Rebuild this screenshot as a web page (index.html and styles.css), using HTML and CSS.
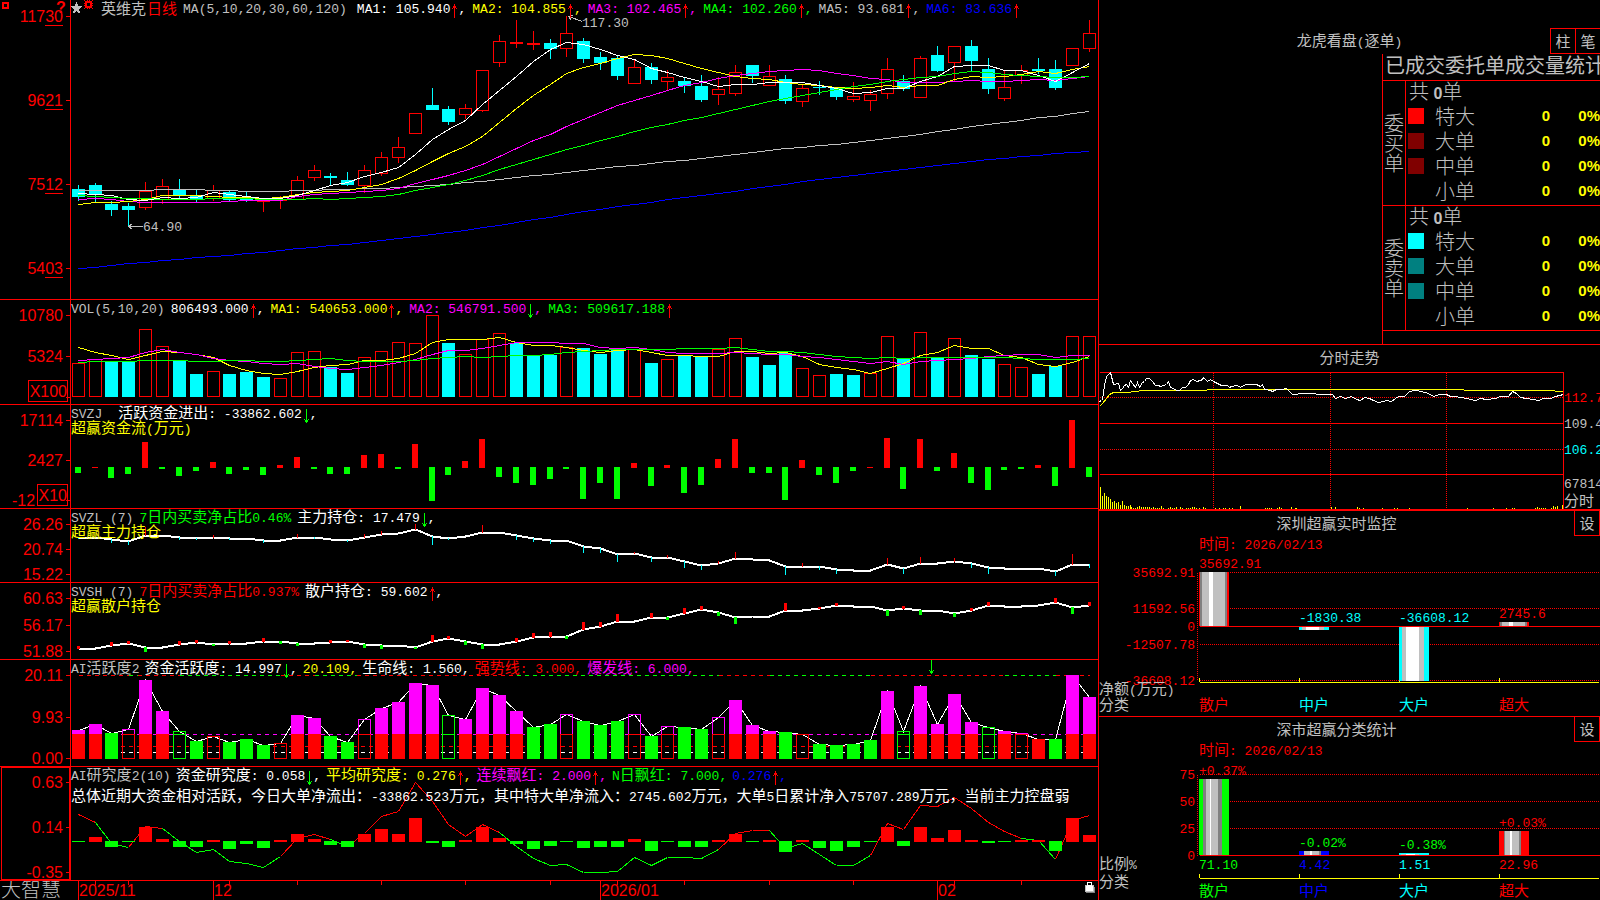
FILE: index.html
```html
<!DOCTYPE html>
<html lang="zh-CN">
<head>
<meta charset="utf-8">
<title>大智慧 - 英维克 日线</title>
<link rel="stylesheet" href="styles.css">
</head>
<body>
<svg class="defs" aria-hidden="true">
  <symbol id="up" viewBox="0 0 8 15"><path class="r f" d="M4 0h1v14h-1zM3 2h3v2h-3zM2 4h1v1h-1zM6 4h1v1h-1z"/></symbol>
  <symbol id="down" viewBox="0 0 8 15"><path class="g f" d="M4 0h1v14h-1zM3 11h3v2h-3zM2 10h1v1h-1zM6 10h1v1h-1z"/></symbol>
  <symbol id="star" viewBox="0 0 11 11"><path class="a f" d="M5 0h1v2h1v2h4v1h-1v1h-1v1h-1v2h1v2h-2v-1h-1v-1h-1v1h-1v1h-2v-2h1v-2h-1v-1h-1v-1h-1v-1h4v-2h1z"/></symbol>
  <symbol id="gear" viewBox="0 0 9 9"><path class="r f" fill-rule="evenodd" d="M0 0h1v1h2v-1h1v1h1v-1h1v1h2v-1h1v1h-1v2h1v1h-1v1h1v1h-1v2h1v1h-1v-1h-2v1h-1v-1h-1v1h-1v-1h-2v1h-1v-1h1v-2h-1v-1h1v-1h-1v-1h1v-2h-1zM3 3v3h3v-3z"/></symbol>
</svg>
<main class="desk">
  <div class="charts">
    <section class="panel">
      <svg id="price" class="plot"></svg>
      <div class="head">
        <div class="legend tight price-legend">
          <span class="tools"><svg class="star"><use href="#star"/></svg><svg class="gear"><use href="#gear"/></svg></span>
          <span class="stock"><span class="a cn">英维克</span><span class="r cn">日线</span></span>
          <span class="a">MA(5,10,20,30,60,120)</span>
          <span class="w first">MA1: 105.940<svg class="arrow"><use href="#up"/></svg>,</span>
          <span class="y">MA2: 104.855<svg class="arrow"><use href="#up"/></svg>,</span>
          <span class="m">MA3: 102.465<svg class="arrow"><use href="#up"/></svg>,</span>
          <span class="g">MA4: 102.260<svg class="arrow"><use href="#up"/></svg>,</span>
          <span class="a">MA5: 93.681<svg class="arrow"><use href="#up"/></svg>,</span>
          <span class="b">MA6: 83.636<svg class="arrow"><use href="#up"/></svg></span>
        </div>
      </div>
    </section>
    <section class="panel">
      <svg id="vol" class="plot"></svg>
      <div class="head">
        <div class="legend tight">
          <span class="a">VOL(5,10,20)</span>
          <span class="w">806493.000<svg class="arrow"><use href="#up"/></svg>,</span>
          <span class="y">MA1: 540653.000<svg class="arrow"><use href="#up"/></svg>,</span>
          <span class="m">MA2: 546791.500<svg class="arrow"><use href="#down"/></svg>,</span>
          <span class="g">MA3: 509617.188<svg class="arrow"><use href="#up"/></svg></span>
        </div>
      </div>
    </section>
    <section class="panel">
      <svg id="flow" class="plot"></svg>
      <div class="head">
        <div class="legend wide">
          <span class="a">SVZJ</span>
          <span class="w"><span class="cn">活跃资金进出</span>: -33862.602<svg class="arrow"><use href="#down"/></svg>,</span>
        </div>
        <div class="y"><span class="cn">超赢资金流</span>(<span class="cn">万元</span>)</div>
      </div>
    </section>
    <section class="panel">
      <svg id="major" class="plot"></svg>
      <div class="head">
        <div class="legend tight">
          <span class="a">SVZL (7)</span>
          <span class="g">7<span class="cn">日内买卖净占比</span>0.46%</span>
          <span class="w"><span class="cn">主力持仓</span>: 17.479<svg class="arrow"><use href="#down"/></svg>,</span>
        </div>
        <div class="y"><span class="cn">超赢主力持仓</span></div>
      </div>
    </section>
    <section class="panel">
      <svg id="retail" class="plot"></svg>
      <div class="head">
        <div class="legend tight">
          <span class="a">SVSH (7)</span>
          <span class="r">7<span class="cn">日内买卖净占比</span>0.937%</span>
          <span class="w"><span class="cn">散户持仓</span>: 59.602<svg class="arrow"><use href="#up"/></svg>,</span>
        </div>
        <div class="y"><span class="cn">超赢散户持仓</span></div>
      </div>
    </section>
    <section class="panel">
      <svg id="active" class="plot"></svg>
      <div class="head">
        <div class="legend">
          <span class="a">AI<span class="cn">活跃度</span>2</span>
          <span class="w"><span class="cn">资金活跃度</span>: 14.997<svg class="arrow"><use href="#down"/></svg>,</span>
          <span class="y">20.109,</span>
          <span class="w"><span class="cn">生命线</span>: 1.560,</span>
          <span class="r"><span class="cn">强势线</span>: 3.000,</span>
          <span class="m"><span class="cn">爆发线</span>: 6.000,</span>
        </div>
      </div>
    </section>
    <section class="panel">
      <svg id="study" class="plot"></svg>
      <div class="head">
        <div class="legend">
          <span class="a">AI<span class="cn">研究度</span>2(10)</span>
          <span class="w"><span class="cn">资金研究度</span>: 0.058<svg class="arrow"><use href="#down"/></svg>,</span>
          <span class="y"><span class="cn">平均研究度</span>: 0.276<svg class="arrow"><use href="#up"/></svg>,</span>
          <span class="m"><span class="cn">连续飘红</span>: 2.000<svg class="arrow"><use href="#up"/></svg>,</span>
          <span class="g">N<span class="cn">日飘红</span>: 7.000,</span>
          <span class="b">0.276<svg class="arrow"><use href="#up"/></svg>,</span>
        </div>
        <div class="w note"><span class="cn">总体近期大资金相对活跃，今日大单净流出：</span>-33862.523<span class="cn">万元，其中特大单净流入：</span>2745.602<span class="cn">万元，大单</span>5<span class="cn">日累计净入</span>75707.289<span class="cn">万元，当前主力控盘弱</span></div>
      </div>
    </section>
    <footer class="panel timeline">
      <svg id="dates" class="plot"></svg>
    </footer>
  </div>

  <aside class="side">
    <section class="orders">
      <header class="orders-top">
        <h2><span class="cn">龙虎看盘</span>(<span class="cn">逐单</span>)</h2>
        <div class="modes"><button type="button">柱</button><button type="button">笔</button></div>
      </header>
      <div class="orders-body">
        <div class="orders-list"></div>
        <div class="stats">
          <h3>已成交委托单成交量统计</h3>
          <table>
            <tbody>
              <tr><th class="sidehead" rowspan="5" scope="rowgroup"><span>委买单</span></th><td class="total" colspan="4">共 <b>0</b>单</td></tr>
              <tr><td class="key"><i class="swatch r"></i></td><td class="name">特大</td><td class="num">0</td><td class="num">0%</td></tr>
              <tr><td class="key"><i class="swatch dr"></i></td><td class="name">大单</td><td class="num">0</td><td class="num">0%</td></tr>
              <tr><td class="key"><i class="swatch dr"></i></td><td class="name">中单</td><td class="num">0</td><td class="num">0%</td></tr>
              <tr class="last"><td class="key"></td><td class="name">小单</td><td class="num">0</td><td class="num">0%</td></tr>
            </tbody>
            <tbody>
              <tr><th class="sidehead" rowspan="5" scope="rowgroup"><span>委卖单</span></th><td class="total" colspan="4">共 <b>0</b>单</td></tr>
              <tr><td class="key"><i class="swatch c"></i></td><td class="name">特大</td><td class="num">0</td><td class="num">0%</td></tr>
              <tr><td class="key"><i class="swatch t"></i></td><td class="name">大单</td><td class="num">0</td><td class="num">0%</td></tr>
              <tr><td class="key"><i class="swatch t"></i></td><td class="name">中单</td><td class="num">0</td><td class="num">0%</td></tr>
              <tr class="last"><td class="key"></td><td class="name">小单</td><td class="num">0</td><td class="num">0%</td></tr>
            </tbody>
          </table>
        </div>
      </div>
    </section>
    <section class="panel intraday">
      <svg id="intraday" class="plot"></svg>
      <h2 class="cn">分时走势</h2>
    </section>
    <section class="panel monitor">
      <svg id="net" class="plot"></svg>
      <div class="bar"><h2 class="cn">深圳超赢实时监控</h2><button type="button">设</button></div>
    </section>
    <section class="panel monitor">
      <svg id="ratio" class="plot"></svg>
      <div class="bar"><h2 class="cn">深市超赢分类统计</h2><button type="button">设</button></div>
    </section>
  </aside>
</main>
<script src="charts.js"></script>
</body>
</html>
```
FILE: styles.css
```css
* { box-sizing: border-box; }

body {
  margin: 0;
  background: #000;
  color: #c0c0c0;
  font-family: "Liberation Mono", "Noto Sans CJK SC", monospace;
  font-size: 13px;
  line-height: 15px;
  overflow: hidden;
}

h2, h3 { margin: 0; font-size: inherit; font-weight: normal; }

.defs { position: absolute; width: 0; height: 0; }
.cn { font-family: "Noto Sans CJK SC", sans-serif; font-size: 15px; }
.head .cn, .orders-top .cn { line-height: 0; }

/* palette */
.r { --c: #f00; color: #f00; }
.g { --c: #0f0; color: #0f0; }
.y { --c: #ff0; color: #ff0; }
.m { --c: #f0f; color: #f0f; }
.c { --c: #0ff; color: #0ff; }
.w { --c: #fff; color: #fff; }
.a { --c: #c0c0c0; color: #c0c0c0; }
.b { --c: #00f; color: #00f; }
.d { --c: #808080; }
.dr { --c: #800000; }
.t { --c: #008080; }
.f { fill: var(--c); }
.s { fill: none; stroke: var(--c); }
.thick { stroke-width: 2; }
.dash { stroke-dasharray: 4 4; }
.dots { stroke-dasharray: 1 1; }

.desk {
  display: grid;
  grid-template-columns: minmax(0, 1099fr) minmax(0, 501fr);
  grid-template-rows: minmax(0, 1fr);
  height: 100vh;
}

.charts {
  display: grid;
  grid-template-columns: minmax(0, 1fr);
  grid-template-rows:
    minmax(0, 300fr) minmax(0, 105fr) minmax(0, 104fr) minmax(0, 74fr)
    minmax(0, 77fr) minmax(0, 107fr) minmax(0, 114fr) minmax(0, 19fr);
  border-right: 1px solid #f00;
  min-width: 0;
}

.panel {
  display: grid;
  grid-template: minmax(0, 1fr) / minmax(0, 1fr);
  border-bottom: 1px solid #f00;
  min-width: 0;
  min-height: 0;
  overflow: hidden;
}
.panel > * { grid-area: 1 / 1; }
.timeline { border-bottom: 0; }

.plot {
  display: block;
  width: 100%;
  height: 100%;
  min-height: 0;
  overflow: hidden;
  shape-rendering: crispEdges;
}
.plot text { fill: var(--c); white-space: pre; }
.plot .scale { font-family: "Liberation Sans", sans-serif; font-size: 16px; }
.plot .brand { font-family: "Noto Sans CJK SC", sans-serif; font-size: 20px; font-weight: 300; }
.plot .help { font-family: "Liberation Sans", sans-serif; font-size: 16px; font-weight: bold; }

.head { padding: 2px 0 0 71px; white-space: nowrap; height: 0; }
.head > div { height: 15px; }
.legend { display: flex; gap: 5px; }
.legend > span { height: 15px; white-space: pre; }
.tight { gap: 6px; }
.wide { gap: 16px; }
.price-legend .first { margin-left: 4px; }
.tools { display: flex; gap: 2px; width: 22px; margin: -2px 2px 0 0; }
.stock { display: flex; gap: 1px; line-height: 15px; }
.legend .stock .cn { line-height: 12px; }
.head .note { margin-top: 6px; }
.arrow { width: 8px; height: 15px; margin: -4px 0; vertical-align: -2px; shape-rendering: crispEdges; }
.star { width: 11px; height: 11px; margin-top: 2px; shape-rendering: crispEdges; }
.gear { width: 9px; height: 9px; shape-rendering: crispEdges; }

.side {
  display: grid;
  grid-template-columns: minmax(0, 1fr);
  grid-template-rows: minmax(0, 345fr) minmax(0, 166fr) minmax(0, 206fr) minmax(0, 183fr);
  min-width: 0;
}

button {
  width: 25px;
  height: 26px;
  padding: 0;
  border: 0 solid #f00;
  border-width: 1px 0 1px 1px;
  background: #000;
  color: #c0c0c0;
  font: 15px/20px "Noto Sans CJK SC", sans-serif;
}

.orders {
  display: flex;
  flex-direction: column;
  padding-top: 28px;
  border-bottom: 1px solid #f00;
  min-width: 0;
  overflow: hidden;
}
.orders-top { display: grid; grid-template-columns: 1fr auto 1fr; align-items: center; }
.orders-top h2 { grid-column: 2; padding-top: 3px; }
.modes { display: flex; justify-content: flex-end; }
.orders-body { display: flex; flex: 1; min-height: 0; }
.orders-list { flex: 1; }
.stats {
  width: 218px;
  border-left: 1px solid #f00;
  overflow: hidden;
  font-family: "Noto Sans CJK SC", sans-serif;
  font-size: 20px;
  font-weight: 300;
}
.stats h3 {
  padding-left: 2px;
  height: 27px;
  line-height: 22px;
  border-bottom: 1px solid #f00;
  white-space: nowrap;
}
table { width: 100%; border-spacing: 0; }
tr { height: 25px; }
td, th { padding: 0; height: 25px; line-height: 20px; font-weight: 300; }
td { vertical-align: top; }
.last td, .sidehead { border-bottom: 1px solid #f00; }
.sidehead { width: 23px; border-right: 1px solid #f00; }
.sidehead span { display: block; width: 20px; margin: 0 auto; line-height: 20px; }
.total { padding-left: 3px; }
.total b { font: bold 16px/16px "Liberation Sans", sans-serif; }
.key { width: 29px; padding: 2px 0 0 2px; }
.swatch { display: block; width: 16px; height: 16px; background: var(--c); }
.num { color: #ff0; font: bold 15px/20px "Liberation Sans", sans-serif; text-align: right; width: 50px; }

.intraday { border-bottom-width: 2px; }
.intraday h2 { justify-self: center; margin-top: 4px; height: 15px; }
.monitor:last-child { border-bottom: 0; }
.bar { display: flex; height: 25px; align-items: center; }
.bar h2 { flex: 1; text-align: center; padding-bottom: 3px; }
.bar button { width: 26px; height: 25px; border-width: 0 1px 1px 1px; }
```
FILE: charts.js
```js
const NS = 'http://www.w3.org/2000/svg';
const FIRST = 78;
const STEP = 16.85;
const pos = i => FIRST + i * STEP;

class Chart {
  constructor(id, x0, x1, y0, y1) {
    this.svg = document.getElementById(id);
    this.svg.replaceChildren();
    this.w = this.svg.clientWidth;
    this.h = this.svg.clientHeight;
    Object.assign(this, { x0, x1, y0, y1 });
  }
  X(v) { return Math.floor((v - this.x0) / (this.x1 - this.x0) * this.w + 0.2); }
  Y(v) { return Math.floor((v - this.y0) / (this.y1 - this.y0) * this.h + 0.2); }
  add(tag, cls, attrs) {
    const e = document.createElementNS(NS, tag);
    e.setAttribute('class', cls);
    for (const k in attrs) e.setAttribute(k, attrs[k]);
    this.svg.append(e);
    return e;
  }
  line(cls, pts) {
    const points = pts.map(p => (this.X(p[0]) + 0.5) + ',' + (this.Y(p[1]) + 0.5)).join(' ');
    this.add('polyline', cls + ' s', { points });
  }
  series(cls, ys) { this.line(cls, ys.map((y, i) => [pos(i), y])); }
  fill(cls, x, y, width, height) { this.add('rect', cls + ' f', { x, y, width, height: Math.max(1, height) }); }
  frame(cls, x, y, width, height) {
    this.add('rect', cls + ' s', { x: x + 0.5, y: y + 0.5, width: width - 1, height: Math.max(1, height - 1) });
  }
  column(i, half) { return this.X(pos(i)) - half; }
  text(cls, x, y, str, anchor = 'start', dy = 5) {
    const t = this.add('text', cls, { x: this.X(x), y: this.Y(y) + dy, 'text-anchor': anchor });
    for (const run of str.match(/[\u2e80-\uffff]+|[^\u2e80-\uffff]+/g)) {
      const s = document.createElementNS(NS, 'tspan');
      if (run.charCodeAt(0) > 0x2e80 && !/brand/.test(cls)) s.setAttribute('class', 'cn');
      s.textContent = run;
      t.append(s);
    }
  }
  axis(labels) {
    this.fill('r', this.X(70), 0, 1, this.h);
    for (const [y, str] of labels) {
      this.fill('r', this.X(66), this.Y(y), 4, 1);
      if (str) this.text('r scale', 63, y, str, 'end', 6);
    }
  }
}

const candles = `c555,567,591,603 c549,555,583,606 c603,612,630,648 c609,618,630,678 r546,573,623,627 r537,559,598,610
c537,570,588,594 c570,588,597,606 r557,571,596,600 c572,577,600,608 c576,592,600,608 r600,600,604,633 r588,597,601,624
r528,541,598,598 r495,511,533,540 c519,528,534,555 c516,540,555,558 r495,511,557,578 r456,472,521,525 r411,442,473,486
r340,340,401,401 c264,315,330,330 c318,327,366,375 r312,325,344,354 r211,211,332,335 r105,124,188,198 r60,126,131,141
r93,129,134,147 c117,129,147,177 r50,100,146,168 c114,123,177,189 c156,171,189,210 c165,174,228,240 r180,202,250,250
c189,201,240,252 r210,232,244,270 c232,243,258,279 c225,258,300,306 r231,268,284,312 r195,217,281,285 c195,195,228,249
r195,229,257,257 c225,237,303,312 r253,265,305,318 c243,261,264,285 c264,264,291,300 r246,289,299,303 r270,283,302,330
r174,208,281,294 c225,243,267,273 r168,175,293,293 c138,165,213,216 r139,139,188,240 c120,138,183,214 c174,207,267,282
r212,262,296,300 r195,210,226,249 c174,207,213,222 c180,207,264,270 r145,145,197,197 r60,100,146,153`
  .split(/\s+/).map(s => [s[0], ...s.slice(1).split(',').map(Number)]);

const averages = {
  b: [805,801,795,791,787,782,777,773,769,765,760,756,751,746,741,737,732,726,721,715,709,702,696,690,682,675,667,658,651,642,634,628,618,613,606,598,592,586,579,573,565,560,553,543,538,531,525,520,513,507,502,496,490,484,478,474,469,465,460,457,454],
  a: [571,571,571,571,570,568,568,568,570,571,574,574,573,571,570,569,568,566,564,562,558,555,552,548,544,538,532,526,523,517,510,505,499,496,490,485,481,476,470,463,457,451,446,441,436,433,428,422,415,409,403,394,388,379,373,368,361,353,349,341,334],
  m: [598,595,598,603,607,607,607,607,607,604,602,600,600,590,582,580,578,574,570,565,550,538,526,512,492,468,446,422,402,379,358,337,316,301,287,271,256,246,235,226,220,214,211,208,211,220,226,234,239,246,248,247,244,241,243,244,242,238,240,235,230],
  y: [613,607,607,603,599,587,587,586,588,592,593,594,592,583,577,574,571,563,553,535,510,484,460,438,408,366,325,286,252,220,202,189,174,163,167,175,191,205,217,228,235,238,247,253,256,262,265,262,257,261,257,256,238,229,232,228,223,214,220,209,199],
  w: [579,584,587,598,601,592,595,592,577,583,589,594,596,587,570,556,547,528,517,502,463,417,388,362,312,270,228,184,148,127,133,148,165,179,204,217,232,244,259,254,254,247,247,247,257,264,280,277,265,264,244,228,199,196,196,211,212,226,244,218,190],
  g: [587,590,593,596,596,597,598,598,595,595,596,597,598,597,595,598,595,592,589,583,570,562,553,542,526,508,492,477,463,448,435,420,408,394,382,373,361,352,340,328,316,304,295,286,277,267,259,252,243,238,233,228,219,214,216,223,226,228,231,233,229]
};

const parse = s => s.trim().split(/\s+/).map(t => [t[0], Number(t.slice(1))]);

const volume = parse(`r220 r208 c215 c213 r118 r169 c212 c252 r244 c252 c246 c262 r265 r187 r184 c232 c249 r202 r184 r157
r160 r76 c159 r193 r149 r130 c159 c197 c195 r172 c174 c192 c178 r178 c219 r208 c197 c199 r178 r145 c201 c225 c190 r235 r256
c252 c255 r250 r139 c206 r127 c202 r145 c195 c207 r223 r232 c252 c229 r139 r139`);
const volumeAverages = {
  y: [172,187,196,208,196,184,187,193,202,226,240,250,253,244,231,226,223,212,211,205,190,157,148,149,149,143,157,166,167,172,181,187,182,178,187,196,197,200,199,184,184,189,187,199,222,232,239,250,234,221,196,187,166,175,176,196,203,222,230,217,199],
  m: [211,208,206,202,187,179,187,193,205,211,215,219,223,220,230,234,238,232,226,218,208,192,182,181,176,167,157,158,158,160,160,172,175,172,179,187,190,190,190,186,190,192,193,199,203,209,214,220,214,222,214,211,208,205,199,197,193,193,202,197,197],
  g: [217,214,213,214,211,211,212,214,213,211,212,213,214,211,208,206,211,213,214,214,210,206,202,199,202,199,196,196,193,187,184,182,177,177,178,178,175,175,175,172,177,184,184,187,192,199,202,205,203,206,202,202,202,202,202,202,205,208,209,208,205]
};

const flow = parse(`g549 r532 g564 g552 r456 g537 g558 g543 r516 g552 g540 g555 r525 r501 g537 g552 g552 r495 r492 g537 r462
g633 g555 r513 r447 g561 g579 g585 g567 g537 g627 g579 g627 r519 g588 r525 g609 g585 r507 r447 g549 g549 g630 r510 g555 g579
g543 r531 r444 g597 r447 g543 r489 g579 g600 g540 g537 r525 g588 r390 g561`);

const major = [741,741,748,753,736,736,741,744,741,744,745,750,750,741,742,748,750,743,733,731,719,739,745,740,726,727,737,745,750,750,769,774,792,791,801,802,813,826,821,806,808,810,828,828,829,838,840,840,824,834,820,819,815,820,832,834,834,834,844,822,822];
const majorSpikes = { 0:746,2:758,3:762,6:748,7:748,9:749,11:758,14:745,16:755,21:762,22:749,26:747,27:755,28:759,30:786,31:786,32:813,34:813,36:831,37:837,42:852,44:837,45:849,49:849,53:831,54:849,58:855,60:831,4:713,8:735,13:732,17:732,18:723,20:702,24:705,33:786,35:797,38:813,39:786,43:819,48:804,50:801,52:804,59:792 };
const retail = [234,234,227,220,231,232,223,218,222,219,219,213,214,219,219,217,213,223,225,226,232,213,205,213,222,222,213,203,198,198,178,170,153,153,141,142,129,118,127,141,138,138,120,120,116,107,108,108,121,116,120,121,130,121,107,108,108,107,98,112,107];
const retailSpikes = { 0:228,2:216,3:213,6:213,7:210,9:213,11:204,15:210,16:210,21:195,22:198,26:204,27:189,28:186,30:156,31:156,32:132,34:129,36:114,37:108,42:99,44:111,45:99,49:108,53:114,54:96,58:84,60:96,4:245,8:227,12:219,13:227,17:231,18:234,20:236,23:224,24:236,29:204,35:147,38:137,39:159,48:135,50:132,52:138,59:129 };

/* f: filled red/magenta, o: hollow red/magenta, g: filled green, h: hollow green */
const active = parse(`f480 f462 g489 o478 f330 f423 h484 g513 o499 g516 g507 g525 o520 f435 f444 g498 g516 o448 f414 f396 f339
f345 h436 f447 f354 f375 f423 g471 g462 o433 g453 g465 g453 o433 g498 o469 g471 g477 o442 f390 f465 f483 g486 o493 g522 g525
g522 g510 f363 h484 f348 f462 f372 f456 h472 f483 o490 f507 g507 f315 f381`);

const study = parse(`g814 r801 g831 g814 r771 r807 g831 g831 r810 g837 g822 g834 r810 r792 r807 g825 g831 r792 r777 r792 r744
g819 g831 r810 r771 r804 g822 g837 g828 g816 g834 g831 g831 r807 g843 g816 g831 g831 r810 r792 g816 r810 g846 r810 g834 g843
g831 g816 r771 g828 r771 r804 r780 r810 g819 g816 r810 r810 g843 r744 r795`);
const studyLine = [733,757,820,832,770,776,815,846,839,873,880,892,860,806,794,807,828,790,739,723,636,695,763,799,763,788,830,866,886,883,907,907,903,862,886,862,862,865,839,790,781,781,835,820,852,886,886,856,760,778,706,709,682,716,757,784,805,812,868,750,736];
const studyGreen = i => (i >= 1 && i <= 2) || (i >= 5 && i <= 11) || i === 15 || (i >= 25 && i <= 37) || (i >= 41 && i <= 46) || i === 56 || i === 57;

const minuteLine = [28,184,33,180,37,178,43,135,50,110,56,102,61,97,66,122,71,134,76,134,80,129,85,131,91,151,98,146,103,137,109,134,114,141,121,122,128,130,136,141,142,128,148,142,158,126,164,124,169,116,179,116,188,124,196,135,205,136,211,140,219,135,229,134,235,125,241,141,250,146,258,150,268,150,277,141,287,142,294,134,302,122,309,118,318,125,330,121,336,119,341,112,347,118,353,125,361,117,370,124,382,130,394,135,412,136,418,141,424,138,442,136,451,142,460,136,470,133,500,134,510,140,517,133,524,148,540,152,548,153,560,148,575,147,590,145,600,157,607,163,640,160,665,160,690,164,727,163,737,175,752,170,767,175,785,170,800,178,812,181,822,173,838,174,850,182,865,187,880,184,890,180,903,184,915,176,925,168,942,168,957,153,975,151,995,154,1015,159,1030,170,1048,163,1070,163,1080,170,1095,168,1110,172,1130,176,1155,181,1170,176,1190,178,1215,176,1230,170,1255,168,1268,154,1280,160,1290,172,1310,175,1330,178,1345,181,1360,174,1380,175,1395,168,1419,163];
const minuteMean = [28,199,38,190,48,175,58,163,70,158,110,156,160,152,300,150,400,148,870,149,1370,152,1419,155];
const minuteVolume = [31,441,37,470,43,459,49,468,55,471,61,477,67,486,73,483,79,489,85,486,91,495,97,483,103,495,109,498,115,498,121,495,124,501,130,504,136,504,142,501,148,498,154,501,160,501,166,501,172,501,178,501,184,504,190,501,196,504,202,504,208,504,214,498,220,504,235,504,241,501,247,504,253,504,259,501,271,501,277,504,289,504,295,504,301,504,307,501,313,501,319,504,328,504,340,501,346,504,376,504,388,504,400,504,406,504,418,504,427,504,451,498,526,504,532,504,538,504,544,504,562,504,568,501,574,504,604,501,616,504,620,504,724,501,736,501,802,501,808,504,820,504,877,504,913,504,922,504,958,504,1132,504,1210,504,1249,504,1267,504,1273,504,1336,504,1342,501,1348,504,1354,504,1360,504,1366,504,1384,504,1390,498,1396,501,1402,498,1418,495];
const pairs = a => a.reduce((o, v, i) => (i % 2 ? o[o.length - 1].push(v) : o.push([v]), o), []);

function drawPrice() {
  const c = new Chart('price', 0, 1098, 0, 897);
  c.axis([[50, '11730'], [302, '9621'], [554, '7512'], [806, '5403']]);
  for (const y of [76, 328, 580, 832]) c.fill('r', c.X(45), c.Y(y), 18, 1);
  c.frame('r', 2, 2, 7, 7);
  c.frame('r', 3, 3, 5, 5);
  c.text('r help', 56, 27, '?', 'start', 4);
  candles.forEach(([k, hi, top, bot, lo], i) => {
    const x = c.column(i, 6), t = c.Y(top), b = c.Y(bot);
    if (k === 'c') {
      c.fill('c', x + 6, c.Y(hi), 1, c.Y(lo) - c.Y(hi));
      c.fill('c', x, t, 13, b - t);
    } else {
      if (t > c.Y(hi)) c.fill('r', x + 6, c.Y(hi), 1, t - c.Y(hi));
      if (c.Y(lo) > b) c.fill('r', x + 6, b, 1, c.Y(lo) - b + 1);
      c.frame('r', x, t, 13, b - t + 1);
    }
  });
  for (const k in averages) c.series(k, averages[k]);
  c.line('a', [[128, 678], [142, 678]]);
  c.line('a', [[132, 669], [128, 678], [132, 687]]);
  c.text('a', 143, 678, '64.90');
  c.line('a', [[568, 50], [582, 65]]);
  c.line('a', [[573, 46], [568, 50], [571, 61]]);
  c.text('a', 582, 66, '117.30');
}

function drawVolume() {
  const c = new Chart('vol', 0, 1098, 30, 342);
  c.axis([[76, '10780'], [199, '5324'], [322, '']]);
  c.frame('r', c.X(28), c.Y(271), 40, 22);
  c.text('r scale', 67, 303, 'X100', 'end', 6);
  volume.forEach(([k, y], i) => {
    const x = c.column(i, 6), h = c.Y(321) - c.Y(y);
    k === 'c' ? c.fill('c', x, c.Y(y), 13, h) : c.frame('r', x, c.Y(y), 13, h);
  });
  for (const k in volumeAverages) c.series(k, volumeAverages[k]);
}

function drawFlow() {
  const c = new Chart('flow', 0, 1098, 345, 654);
  c.axis([[391, '17114'], [511, '2427'], [631, '']]);
  c.text('r scale', 12, 631, '-12', 'start', 6);
  c.frame('r', c.X(37), c.Y(583), 31, 22);
  c.text('r scale', 67, 615, 'X10', 'end', 6);
  flow.forEach(([k, y], i) => {
    const x = c.column(i, 3);
    if (k === 'g') c.fill('g', x, c.Y(531), 6, c.Y(y) - c.Y(531));
    else c.fill('r', x, c.Y(y), 6, c.Y(534) - c.Y(y));
  });
}

function drawHoldings(id, y0, y1, ticks, ys, spikes, up, down, width) {
  const c = new Chart(id, 0, 1098, y0, y1);
  c.axis(ticks);
  const shift = Math.floor(width / 2);
  c.series('w thick', ys);
  for (const i in spikes) {
    const a = c.Y(Math.min(ys[i], spikes[i])), b = c.Y(Math.max(ys[i], spikes[i]));
    c.fill(spikes[i] < ys[i] ? up : down, c.X(pos(+i)) - shift, a, width, b - a + 1);
  }
}

function drawActive() {
  const c = new Chart('active', 0, 1098, 270, 588);
  c.axis([[316, '20.11'], [442, '9.93'], [565, '0.00']]);
  let from = 0;
  for (const [k, to] of [['r', 3], ['g', 3.5], ['r', 6], ['g', 12], ['r', 14], ['g', 16.5], ['r', 26], ['g', 38], ['r', 41], ['g', 47], ['r', 55], ['g', 58], ['r', 60]]) {
    c.line(k + ' dash', [[pos(from), 316], [pos(to), 316]]);
    from = to;
  }
  c.line('m dash', [[72, 493], [1092, 493]]);
  c.line('r dash', [[72, 529], [1092, 529]]);
  c.line('w dash', [[72, 547], [1092, 547]]);
  c.series('w', active.map(v => v[1]));
  active.forEach(([k, y], i) => {
    const x = c.column(i, 6), t = c.Y(y), mid = c.Y(492), base = c.Y(567), redTop = Math.max(t, mid);
    if (k === 'g') c.fill('g', x, t, 13, base - t);
    if (k === 'h') {
      c.frame('g', x, t, 13, base - t);
      c.fill('g', x, mid, 13, 1);
    }
    if (k === 'f') {
      if (t < mid) c.fill('m', x, t, 13, mid - t);
      c.fill('r', x, redTop, 13, base - redTop);
    }
    if (k === 'o') {
      if (t < mid) c.frame('m', x, t, 13, mid - t + 1);
      c.frame('r', x, redTop, 13, base - redTop);
    }
  });
  const x = c.X(931);
  c.add('path', 'g f', { d: `M${x} 0h1v14h-1zM${x - 1} 11h3v2h-3zM${x - 2} 10h1v1h-1zM${x + 2} 10h1v1h-1z` });
}

function drawStudy() {
  const c = new Chart('study', 0, 1098, 591, 930);
  c.frame('r', 1, 0, 69, c.h);
  c.axis([[637, '0.63'], [772, '0.14'], [907, '-0.35']]);
  studyLine.slice(0, -1).forEach((y, i) => c.line(studyGreen(i) ? 'g' : 'r', [[pos(i), y], [pos(i + 1), studyLine[i + 1]]]));
  study.forEach(([k, y], i) => {
    const x = c.column(i, 6);
    if (k === 'g') c.fill('g', x, c.Y(813), 13, c.Y(y) - c.Y(813));
    else c.fill('r', x, c.Y(y), 13, c.Y(816) - c.Y(y));
  });
}

function drawDates() {
  const c = new Chart('dates', 0, 1098, 0, 19);
  for (const i of [1, 3, 9, 13, 18, 23, 28, 32, 36, 41, 46, 52, 56]) c.fill('r', c.X(pos(i)), 0, 1, 4);
  for (const [i, s] of [[0, '2025/11'], [8, '12'], [31, '2026/01'], [51, '02']]) {
    c.fill('r', c.X(pos(i)), 0, 1, c.h);
    c.text('r scale', pos(i) + 1, 9, s, 'start', 6);
  }
  c.text('a brand', 1, 9, '大智慧', 'start', 7);
  const x = c.X(1085);
  c.fill('d', x + 1, 6, 9, 6);
  c.fill('w', x, 5, 8, 6);
  c.frame('a', x, 4, 9, 7);
  c.frame('w', x + 2, 1, 5, 4);
}

function drawIntraday() {
  const c = new Chart('intraday', 27, 1530, 15, 507);
  for (const y of [97, 250, 403]) c.line('r', [[27, y], [1420, y]]);
  for (const y of [172, 328]) c.line('r dots', [[27, y], [1420, y]]);
  for (const x of [370, 721, 1069]) c.line('r dots', [[x, 97], [x, 507]]);
  c.line('r', [[1420, 97], [1420, 507]]);
  for (const [x, y] of pairs(minuteVolume)) c.fill('y', c.X(x), c.Y(y), 1, c.h - c.Y(y));
  c.line('y', pairs(minuteMean));
  c.line('w', pairs(minuteLine));
  c.text('r', 1422, 172, '112.7');
  c.text('a', 1422, 250, '109.4');
  c.text('c', 1422, 328, '106.2');
  c.text('a', 1422, 430, '67814');
  c.text('a', 1424, 484, '分时');
}

/* strips: colour letter and right edge of each vertical band inside a 30px bar */
function bar(c, x, top, bottom, strips) {
  let from = 0;
  for (const s of strips.split(' ')) {
    const to = Number(s.slice(1));
    c.fill(s[0], c.X(x) + from, c.Y(top), to - from, c.Y(bottom) - c.Y(top));
    from = to;
  }
}

function grid(c, dotted, zero, bottom, labels) {
  for (const y of dotted) c.line('r dots', [[327, y], [1530, y]]);
  c.line('r dots', [[322, dotted[0]], [322, Math.max(zero, dotted[dotted.length - 1])]]);
  for (const [y, s] of labels) c.text('r', 317, y, s, 'end', 4);
  c.line('y', [[327, bottom], [1526, bottom]]);
  for (const x of [328, 628, 928, 1228]) c.fill('y', c.X(x), c.Y(bottom) - 4, 1, 4);
}

function drawNet() {
  const c = new Chart('net', 27, 1530, 33, 648);
  grid(c, [217, 325, 433, 541], 380, 547, [[220, '35692.91'], [328, '11592.56'], [382, '0'], [436, '-12507.78'], [544, '-36608.12']]);
  bar(c, 327, 216, 379, 'r1 d3 a10 w14 a26 d28 r30');
  bar(c, 627, 381, 390, 'c3 a7 w20 a25 c30');
  bar(c, 927, 381, 543, 'c3 a7 w20 a25 c30');
  bar(c, 1227, 366, 379, 'r1 d3 a10 w14 a26 d28 r30');
  c.line('r', [[327, 380], [1530, 380]]);
  c.text('r', 329, 132, '时间: 2026/02/13');
  c.text('r', 329, 193, '35692.91', 'start', 4);
  c.text('c', 627, 355, '-1830.38', 'start', 4);
  c.text('c', 927, 355, '-36608.12', 'start', 4);
  c.text('r', 1229, 343, '2745.6', 'start', 4);
  c.text('a', 29, 568, '净额(万元)');
  c.text('a', 29, 616, '分类');
  [['r', '散户'], ['c', '中户'], ['c', '大户'], ['r', '超大']].forEach(([k, s], i) => c.text(k, 329 + i * 300, 616, s));
}

function drawRatio() {
  const c = new Chart('ratio', 27, 1530, 51, 600);
  grid(c, [223, 304, 385], 466, 535, [[226, '75'], [307, '50'], [388, '25'], [469, '0']]);
  bar(c, 327, 237, 465, 'g4 d7 a11 w12 a19 d23 g30');
  bar(c, 627, 453, 465, 'b5 a11 w13 a20 d22 b30');
  bar(c, 927, 459, 465, 'c30');
  bar(c, 935, 462, 465, 'a5 w14 a18');
  bar(c, 1227, 393, 465, 'r5 d6 a11 w13 a20 d22 r30');
  c.line('r', [[327, 466], [1530, 466]]);
  c.text('r', 329, 150, '时间: 2026/02/13');
  c.text('r', 329, 213, '+0.37%', 'start', 4);
  c.text('g', 627, 430, '-0.02%', 'start', 4);
  c.text('g', 927, 436, '-0.38%', 'start', 4);
  c.text('r', 1229, 370, '+0.03%', 'start', 4);
  c.text('a', 29, 493, '比例%');
  c.text('a', 29, 547, '分类');
  [['g', '散户', '71.10'], ['b', '中户', '4.42'], ['c', '大户', '1.51'], ['r', '超大', '22.96']].forEach(([k, s, v], i) => {
    c.text(k, 329 + i * 300, 496, v, 'start', 4);
    c.text(k, 329 + i * 300, 574, s);
  });
}

function draw() {
  drawPrice();
  drawVolume();
  drawFlow();
  drawHoldings('major', 657, 876, [[703, '26.26'], [778, '20.74'], [853, '15.22']], major, majorSpikes, 'r', 'c', 1);
  drawHoldings('retail', 39, 267, [[85, '60.63'], [166, '56.17'], [244, '51.88']], retail, retailSpikes, 'r', 'g', 3);
  drawActive();
  drawStudy();
  drawDates();
  drawIntraday();
  drawNet();
  drawRatio();
}

addEventListener('resize', draw);
draw();
```
